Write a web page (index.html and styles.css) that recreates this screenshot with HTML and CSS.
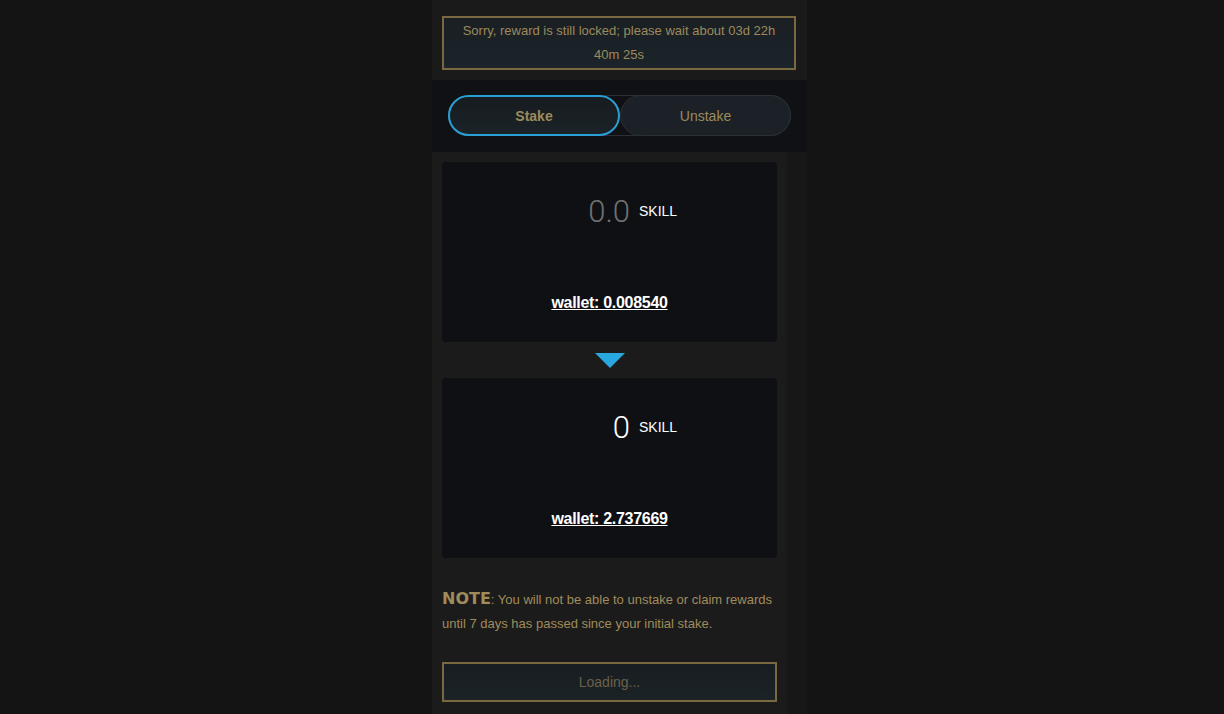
FILE: index.html
```html
<!doctype html>
<html lang="en">
<head>
	<meta charset="UTF-8">
	<title>Stake SKILL</title>
	<link rel="stylesheet" href="styles.css">
</head>
<body>
	<div class="page">
		<!-- reward lock notice -->
		<div class="top">
			<div class="alert">Sorry, reward is still locked; please wait about 03d 22h 40m 25s</div>
		</div>

		<!-- stake / unstake switch -->
		<div class="tabs-bar">
			<div class="tabs">
				<div class="tab active">Stake</div>
				<div class="tab">Unstake</div>
			</div>
		</div>

		<div class="main">
			<div class="content">
				<div class="card">
					<div class="amount-row">
						<span class="amount placeholder">0.0</span>
						<span class="unit">SKILL</span>
					</div>
					<a class="wallet">wallet: 0.008540</a>
				</div>

				<div class="arrow"></div>

				<div class="card">
					<div class="amount-row">
						<span class="amount">0</span>
						<span class="unit">SKILL</span>
					</div>
					<a class="wallet">wallet: 2.737669</a>
				</div>

				<p class="note"><b>NOTE</b>: You will not be able to unstake or claim rewards until 7 days has passed since your initial stake.</p>

				<div class="btn">Loading...</div>
			</div>
			<div class="strip"></div>
		</div>
	</div>
</body>
</html>
```

FILE: styles.css
```css
html,body,div,p{
	margin:0px;padding:0px;
}
html{
	width:100%; height:100%; background:#141414; overflow:hidden;
}
body{
	font-family:"Liberation Sans",Arial,sans-serif; font-size:13px; color:#a08b5b;
}
.page{
	width:375px; margin-left:432px; min-height:714px;
}
.top{
	height:80px; box-sizing:border-box; padding:16px 11px 10px 10px; background:#1a1a1a;
}
.alert{
	border:2px solid #7a6940; padding:1px 8px; line-height:24px; text-align:center;
	background:linear-gradient(#1a1f23,#1b242a); color:#9c8a5c;
}
.tabs-bar{
	height:72px; box-sizing:border-box; padding:15px 16px 0 16px; background:#0f1115;
}
.tabs{
	display:flex; height:41px; border-radius:21px; box-shadow:inset 0 0 0 1px #2a2f34;
}
.tab{
	flex:1; display:flex; align-items:center; justify-content:center; font-size:14px; padding-top:1px;
	border-radius:21px; border:1px solid #2b3035; background:#1b2126; color:#9c8a5c;
}
.tab.active{
	flex:0 0 172px; box-sizing:border-box; border:2px solid #2a9fd6; font-weight:bold;
	background:linear-gradient(#161b1f,#1b2328);
}
.main{
	display:flex;
}
.content{
	width:335px; padding:10px 10px 12px 10px; background:#1b1b1b;
}
.strip{
	flex:1; background:#171717;
}
.card{
	height:180px; box-sizing:border-box; padding:31px 0 30px 0; background:#0f1014; border-radius:4px;
	display:flex; flex-direction:column; align-items:center;
}
.amount-row{
	display:flex; align-items:flex-start; width:100%;
}
.amount{
	flex:0 0 188px; text-align:right; font-family:Roboto,sans-serif; font-size:31px; font-weight:300; line-height:38px; color:#fff;
}
.amount.placeholder{
	color:#707070;
}
.unit{
	margin-left:9px; margin-top:10px; font-size:14px; color:#fff;
}
.wallet{
	margin-top:auto; font-size:16px; font-weight:bold; letter-spacing:-0.3px; line-height:19px; color:#fff; text-decoration:underline;
}
.arrow{
	width:0; height:0; margin:11px auto 10px auto;
	border-left:15px solid transparent; border-right:15px solid transparent; border-top:15px solid #29a7df;
}
.note{
	margin-top:30px; line-height:24px; font-size:13px; color:#a08b5b;
}
.note b{
	font-family:"DejaVu Sans",sans-serif; font-size:16px; line-height:20px;
}
.btn{
	margin-top:26px; height:40px; box-sizing:border-box; border:2px solid #7a6940;
	display:flex; align-items:center; justify-content:center; font-size:14px;
	background:linear-gradient(#181d21,#1b2327); color:#6c6049;
}
```
